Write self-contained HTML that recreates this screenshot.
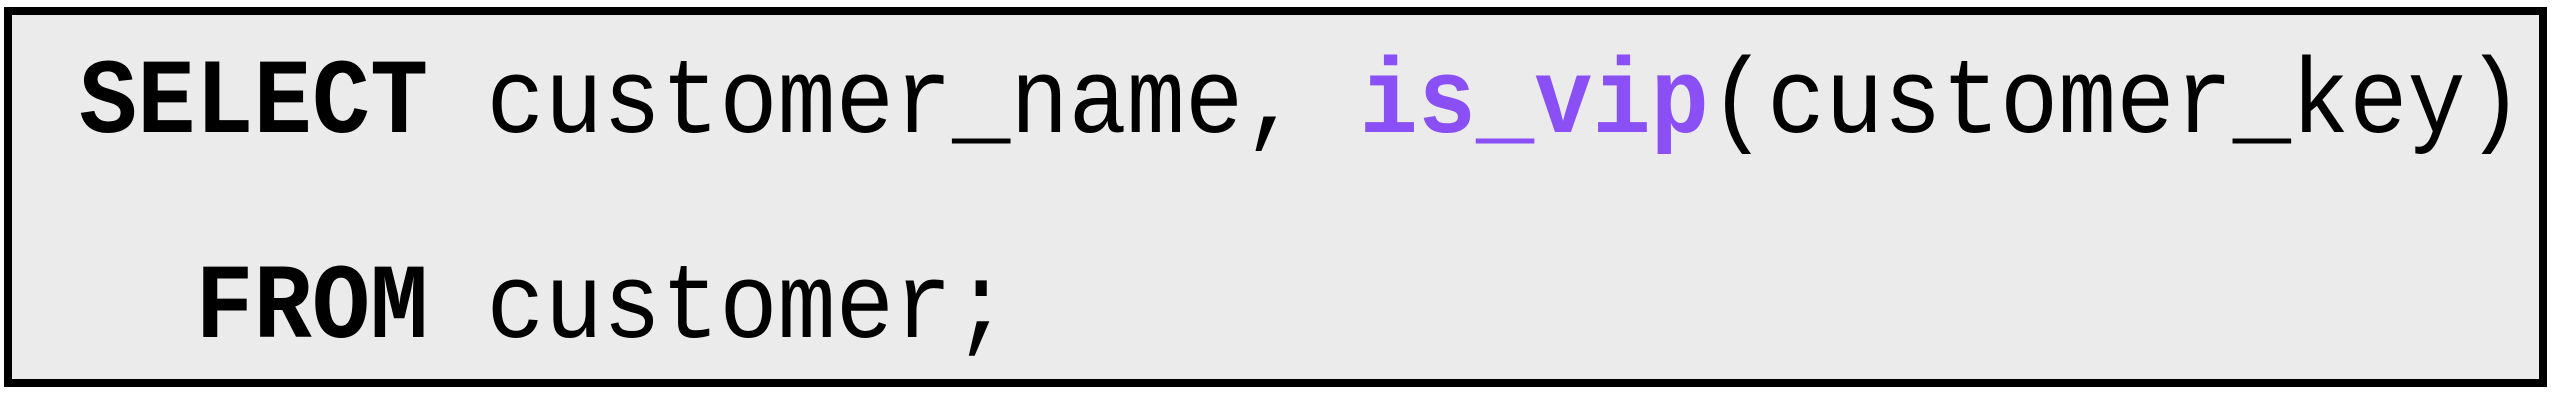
<!DOCTYPE html>
<html><head><meta charset="utf-8"><style>
html,body{margin:0;padding:0;background:#fff;width:2552px;height:407px;overflow:hidden}
.box{position:absolute;left:4px;top:7px;width:2527px;height:364px;border:8px solid #000;background:#ebebeb}
.l{position:absolute;left:79px;font-family:"Liberation Mono",monospace;font-size:97px;line-height:97px;white-space:pre;color:#000;transform:scaleY(1.1);transform-origin:0 74.4px}
b{font-weight:bold}
.p{color:#8a4ff5;font-weight:bold}
</style></head><body>
<div class="box"></div>
<div class="l" style="top:58.6px"><b>SELECT</b> customer_name, <span class="p">is_vip</span>(customer_key)</div>
<div class="l" style="top:263.6px">  <b>FROM</b> customer;</div>
</body></html>
